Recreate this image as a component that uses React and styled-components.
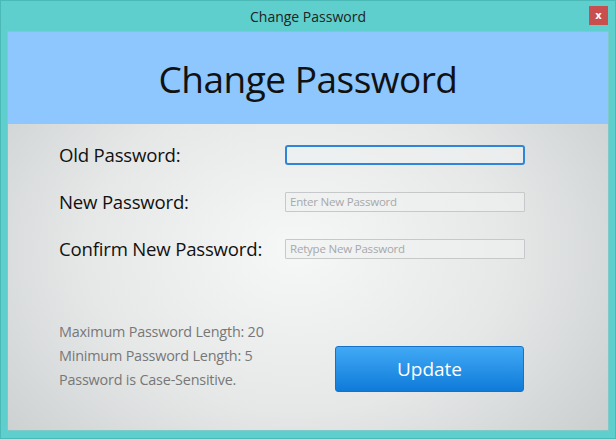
import React from 'react'
import styled, { createGlobalStyle } from 'styled-components'

const Global = createGlobalStyle`
  html, body { margin: 0; padding: 0; }
  body { font-family: "Open Sans", "Noto Sans", sans-serif; }
`

const Window = styled.div`
  width: 616px;
  height: 439px;
  box-sizing: border-box;
  background: #5ecfcc;
  border: 1px solid #4bbab7;
  display: flex;
  flex-direction: column;
  padding: 0 6px 7px 6px;
`

const TitleBar = styled.div`
  height: 30px;
  display: flex;
  align-items: center;
  justify-content: center;
  position: relative;
  font-size: 14px;
  color: #222;
`

const CloseButton = styled.div`
  position: absolute;
  right: 1px;
  top: 5px;
  width: 19px;
  height: 19px;
  background: #c94f4f;
  color: #fff;
  font-size: 10px;
  font-weight: bold;
  display: flex;
  align-items: center;
  justify-content: center;
  font-family: "DejaVu Sans", sans-serif;
`

const Content = styled.div`
  flex: 1;
  display: flex;
  flex-direction: column;
  border: 1px solid #7fc9c8;
  background: radial-gradient(ellipse 70% 80% at 48% 55%, #f6f7f7 0%, #e6e8e8 50%, #c6cacb 100%);
`

const Header = styled.div`
  height: 92px;
  background: #8dc7fe;
  display: flex;
  align-items: center;
  justify-content: center;
  font-size: 37px;
  color: #111;
  letter-spacing: -0.5px;
`

const Form = styled.div`
  display: grid;
  grid-template-columns: 226px 240px;
  grid-auto-rows: 25px;
  row-gap: 22px;
  padding: 18px 0 0 51px;
  align-items: center;
`

const Label = styled.div`
  font-size: 18.6px;
  line-height: 25px;
  color: #111;
  letter-spacing: -0.2px;
`

const Input = styled.div`
  height: 20px;
  box-sizing: border-box;
  border: ${p => (p.focused ? '2px solid #2f86d8' : '1px solid #c6c8c9')};
  border-radius: ${p => (p.focused ? '3px' : '1px')};
  background: ${p => (p.focused ? 'rgba(238,240,240,0.8)' : 'rgba(240,241,241,0.6)')};
  font-size: 11.5px;
  color: #a6a8aa;
  padding-left: 4px;
  display: flex;
  align-items: center;
  letter-spacing: -0.2px;
`

const Footer = styled.div`
  display: flex;
  justify-content: space-between;
  align-items: flex-start;
  padding: 0 84px 0 51px;
`

const Notes = styled.div`
  display: flex;
  flex-direction: column;
  gap: 4px;
  margin-top: 61px;
  font-size: 14.4px;
  line-height: 20px;
  color: #777;
  letter-spacing: -0.2px;
`

const UpdateButton = styled.div`
  width: 189px;
  height: 46px;
  box-sizing: border-box;
  margin-top: 85px;
  border: 1px solid #1672c8;
  border-radius: 3px;
  background: linear-gradient(#41a9f5, #0f7bd9);
  color: #fff;
  font-size: 19px;
  display: flex;
  align-items: center;
  justify-content: center;
`

export default function App() {
  return (
    <>
      <Global />
      <Window>
        <TitleBar>
          Change Password
          <CloseButton>x</CloseButton>
        </TitleBar>
        <Content>
          <Header>Change Password</Header>
          <Form>
            <Label>Old Password:</Label>
            <Input focused />
            <Label>New Password:</Label>
            <Input>Enter New Password</Input>
            <Label>Confirm New Password:</Label>
            <Input>Retype New Password</Input>
          </Form>
          <Footer>
            <Notes>
              <span>Maximum Password Length: 20</span>
              <span>Minimum Password Length: 5</span>
              <span>Password is Case-Sensitive.</span>
            </Notes>
            <UpdateButton>Update</UpdateButton>
          </Footer>
        </Content>
      </Window>
    </>
  )
}
